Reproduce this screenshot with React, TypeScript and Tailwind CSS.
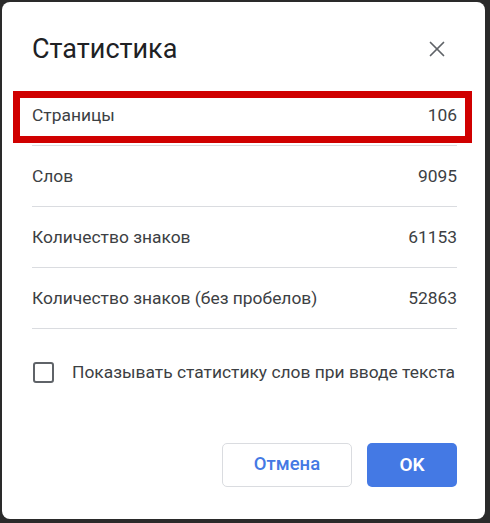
import { X } from "lucide-react";

const ROWS: { label: string; value: string }[] = [
  { label: "Страницы", value: "106" },
  { label: "Слов", value: "9095" },
  { label: "Количество знаков", value: "61153" },
  { label: "Количество знаков (без пробелов)", value: "52863" },
];

export default function App() {
  return (
    <div className="w-[490px] h-[523px] bg-[#2a2a2a] pl-[2px] pt-[2px] overflow-hidden" style={{ fontFamily: "Roboto, 'Liberation Sans', sans-serif" }}>
      <div className="w-[483px] h-[517px] bg-white rounded-[8px] flex flex-col pl-[30px] pr-[28px]">
        {/* header */}
        <div className="flex items-center justify-between pt-[33px] pb-[22px]">
          <h1 className="text-[27px] leading-[28px] text-[#202124]">Статистика</h1>
          <button className="w-[26px] h-[26px] flex items-center justify-center mr-[7px] text-[#5f6368]">
            <X size={26} strokeWidth={1.6} />
          </button>
        </div>

        {/* stats */}
        <div className="flex flex-col">
          {ROWS.map((row, i) => (
            <div key={row.label} className="relative h-[61px] flex items-center justify-between border-b border-[#dadce0] text-[17.4px] text-[#3c4043]">
              <span>{row.label}</span>
              <span>{row.value}</span>
              {i === 0 && (
                <div className="absolute left-[-19px] right-[-15px] top-[6px] bottom-[2px] border-[7px] border-[#d00000] pointer-events-none" />
              )}
            </div>
          ))}
        </div>

        {/* checkbox */}
        <label className="flex items-center gap-[18px] mt-[30px] text-[17.4px] text-[#3c4043]">
          <span className="ml-[1px] w-[21px] h-[21px] border-2 border-[#5f6368] rounded-[3px]" />
          Показывать статистику слов при вводе текста
        </label>

        {/* buttons */}
        <div className="flex justify-end gap-[15px] mt-[58px]">
          <button className="w-[130px] h-[44px] rounded-[5px] border border-[#dadce0] text-[#4479e4] text-[18.5px] font-medium">
            Отмена
          </button>
          <button className="w-[90px] h-[44px] rounded-[5px] bg-[#4479e4] text-white text-[19px] font-semibold">
            OK
          </button>
        </div>
      </div>
    </div>
  );
}
